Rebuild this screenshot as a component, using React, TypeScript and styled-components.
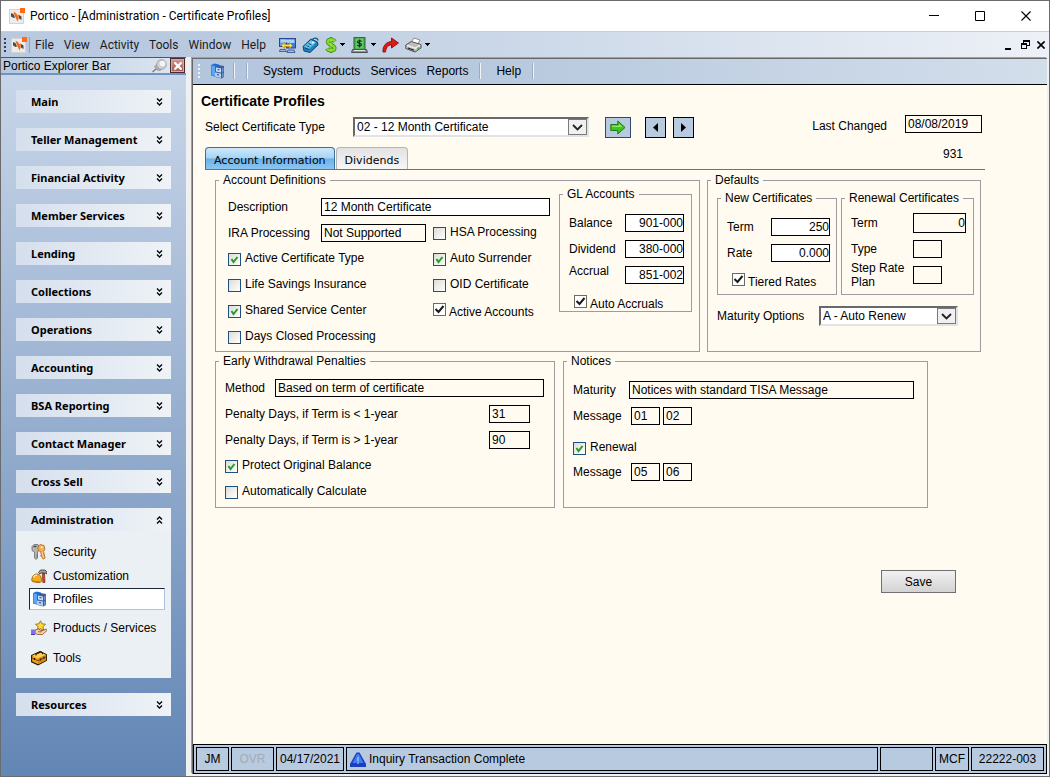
import React from "react";
import styled, { createGlobalStyle, css } from "styled-components";

const GlobalStyle = createGlobalStyle`
  * { box-sizing: border-box; }
  body { margin: 0; background: #6b6b6b; }
  body, button, input, select {
    font-family: "Liberation Sans", Arial, sans-serif;
    font-size: 12px;
    color: #000;
  }
  button, input, select { margin: 0; padding: 0; border-radius: 0; }
`;

/* ---------- window frame ---------- */

const Window = styled.div`
  display: flex;
  flex-direction: column;
  min-height: 100vh;
  border: 1px solid #6b6b6b;
  background: #f0f0f0;
`;

const TitleBar = styled.header`
  display: flex;
  align-items: center;
  height: 31px;
  padding-left: 8px;
  background: #fff;
  border-bottom: 1px solid #b9d1ea;
`;

const WindowTitle = styled.h1`
  flex: 1;
  margin: 0 0 0 5px;
  font: 400 12px/16px Roboto, "Open Sans", sans-serif;
`;

const CaptionButton = styled.button`
  display: grid;
  place-items: center;
  width: 46px;
  height: 30px;
  border: 0;
  background: transparent;
`;

const MenuBar = styled.div`
  display: flex;
  align-items: center;
  height: 25px;
  padding: 0 4px 0 3px;
  background: linear-gradient(90deg, #b8c9e0 0%, #b9cae0 20%, #edf1f7 100%);
`;

const MenuIcon = styled.span`
  display: flex;
  margin-left: 5px;
  padding-right: 2px;
  border-right: 1px solid #8ba3c4;
`;

const Menus = styled.nav`
  display: flex;
  gap: 10px;
  flex: none;
  margin-left: 5px;
`;

const MenuButton = styled.button`
  border: 0;
  background: transparent;
  font: 400 12px/18px Roboto, "Open Sans", sans-serif;
  color: #1b1b1b;
`;

const Tools = styled.div`
  display: flex;
  align-items: center;
  flex: 1;
  gap: 6px;
  margin-left: 13px;
`;

const IconButton = styled.button`
  display: flex;
  align-items: center;
  gap: 3px;
  border: 0;
  background: transparent;
`;

const MdiButtons = styled.div`
  display: flex;
  align-items: center;
  gap: 6px;
`;

const Grip = styled.span<{ $light?: boolean }>`
  width: 2px;
  height: 14px;
  background: repeating-linear-gradient(
    180deg,
    ${(p) => (p.$light ? "#eef3fa" : "#27415f")} 0 2px,
    transparent 2px 4px
  );
`;

const Body = styled.div`
  display: flex;
  flex: 1;
`;

/* ---------- explorer bar ---------- */

const Explorer = styled.aside`
  display: flex;
  flex-direction: column;
  flex: none;
  width: 185px;
  background: linear-gradient(180deg, #cbd8ea 0%, #6286b5 100%);
`;

const ExplorerHead = styled.div`
  display: flex;
  align-items: center;
  gap: 3px;
  height: 18px;
  padding: 0 1px 0 2px;
  border-top: 1px solid #555;
  border-bottom: 2px solid #6f94c4;
  background: linear-gradient(90deg, #b5c8df, #dfe8f2);
`;

const ExplorerTitle = styled.h2`
  flex: 1;
  margin: 0;
  font-size: 12px;
  font-weight: 400;
  line-height: 16px;
`;

const CloseButton = styled.button`
  display: grid;
  place-items: center;
  width: 15px;
  height: 15px;
  border: 1px solid #4a2a2e;
  background: linear-gradient(180deg, #cf9a94, #a35850);
  box-shadow: inset 0 0 0 1px #d8aaa6;
`;

const Groups = styled.div`
  display: flex;
  flex-direction: column;
  gap: 15px;
  padding: 15px;
`;

const GroupHead = styled.button`
  display: flex;
  align-items: center;
  justify-content: space-between;
  width: 100%;
  height: 23px;
  padding: 0 8px 0 15px;
  border: 0;
  background: linear-gradient(90deg, #d5dfed, #eff3f7);
  font: 700 11px/16px "Noto Sans", "Open Sans", sans-serif;
`;

const GroupBody = styled.div`
  padding: 9px 6px 5px 13px;
  background: #eaf0f4;
`;

const LinkList = styled.ul<{ $tall?: boolean }>`
  margin: ${(p) => (p.$tall ? "3px" : "0")} 0 0;
  padding: 0;
  list-style: none;
  a { height: ${(p) => (p.$tall ? "30px" : "24px")}; }
`;

const ExplorerLink = styled.a<{ $current?: boolean }>`
  display: flex;
  align-items: center;
  gap: 6px;
  padding-left: 2px;
  color: #000;
  text-decoration: none;
  ${(p) =>
    p.$current &&
    css`
      && { height: 22px; }
      background: #fff;
      border: 1px solid;
      border-color: #17263c #b0c4de #b0c4de #17263c;
    `}
`;

/* ---------- document area ---------- */

const Main = styled.main`
  display: flex;
  flex-direction: column;
  flex: 1;
  margin: 1px 2px 2px 6px;
  border: solid #696969;
  border-width: 1px 0 0 1px;
  box-shadow: -1px -1px #a0a0a0;
  background: #fffbf0;
`;

const PageBar = styled.div`
  display: flex;
  align-items: center;
  height: 26px;
  padding: 0 5px 1px;
  border-bottom: 1px solid #000;
  background: linear-gradient(90deg, #b4c6de 0%, #b9cadf 40%, #d3deeb 100%);
`;

const PageMenu = styled.nav`
  display: flex;
  gap: 10px;
  margin: 0 11px 0 16px;
`;

const PageMenuButton = styled.button`
  border: 0;
  background: transparent;
  line-height: 16px;
`;

const BarIcon = styled(IconButton)`
  margin: 0 8px 0 10px;
`;

const Divider = styled.span`
  width: 1px;
  height: 16px;
  background: #9caabd;
  box-shadow: 1px 0 #f0f4f9;
`;

const SecondDivider = styled(Divider)`
  margin-left: 12px;
`;

const Page = styled.section`
  flex: 1;
  padding: 8px 62px 16px 12px;
`;

const PageTitle = styled.h2`
  margin: 0 0 6px -4px;
  font-size: 14px;
  line-height: 16px;
`;

const PickerRow = styled.div`
  display: flex;
  align-items: flex-end;
  justify-content: space-between;
  height: 23px;
  padding-right: 3px;
`;

const Picker = styled.div`
  display: flex;
  line-height: 21px;
  > label { width: 148px; }
`;

const SquareButton = styled.button<{ $wide?: boolean }>`
  display: grid;
  place-items: center;
  width: ${(p) => (p.$wide ? "26px" : "21px")};
  height: 21px;
  margin-left: ${(p) => (p.$wide ? "16px" : "7px")};
  border: 1px solid ${(p) => (p.$wide ? "#33486a" : "#000")};
  background: #b8cae0;
`;

const PrevNext = styled.div`
  display: flex;
  margin-left: 7px;
`;

const LastChanged = styled.div`
  display: flex;
  align-self: flex-start;
  gap: 18px;
  line-height: 22px;
`;

const TabRow = styled.div`
  display: flex;
  height: 23px;
  margin-top: 9px;
  padding-right: 22px;
  border-bottom: 1px solid #4a7ba6;
`;

const Tab = styled.button<{ $active?: boolean }>`
  height: 22px;
  padding: 5px 8px 0;
  border: 1px solid ${(p) => (p.$active ? "#3c6e9e" : "#b5b5b5")};
  border-bottom: 0;
  border-radius: 4px 4px 0 0;
  background: ${(p) =>
    p.$active
      ? "linear-gradient(180deg, #cfe8fa 0%, #a5d3f5 48%, #69b1e8 52%, #8ec6f0 100%)"
      : "linear-gradient(180deg, #e2e2e2 0%, #f7f7f7 100%)"};
  font: 400 11px/16px "DejaVu Sans", Verdana, sans-serif;
  & + & { margin-left: 1px; }
`;

const RecordNumber = styled.span`
  margin-left: auto;
  line-height: 14px;
`;

const Columns = styled.div<{ $cols: string; $gap: number; $inset?: number }>`
  display: grid;
  grid-template-columns: ${(p) => p.$cols};
  gap: ${(p) => p.$gap}px;
  padding-right: ${(p) => p.$inset ?? 0}px;
`;

const Panels = styled.div`
  display: grid;
  gap: 2px;
  padding: 3px 4px 0 10px;
`;

/* ---------- form parts ---------- */

const Group = styled.fieldset`
  min-width: 0;
  margin: 0;
  padding: 0;
  border: 1px solid #9d9da1;
`;

const GroupTitle = styled.legend`
  margin-left: 3px;
  padding: 0 4px;
  line-height: 14px;
  white-space: nowrap;
`;

const GroupContent = styled.div<{ $pad: string }>`
  padding: ${(p) => p.$pad};
`;

const Row = styled.div<{ $label?: number; $height?: number }>`
  display: flex;
  align-items: center;
  height: ${(p) => p.$height ?? 26}px;
  line-height: 18px;
  white-space: nowrap;
  > label:first-child { width: ${(p) => (p.$label ? p.$label + "px" : "auto")}; }
`;

const RenewalRow = styled(Row)`
  margin-top: 8px;
`;

const TopLabel = styled.label`
  align-self: flex-start;
`;

const TwoLineLabel = styled.label`
  line-height: 14px;
  white-space: normal;
`;

const TextBox = styled.input<{ $w?: number; $filled?: boolean; $right?: boolean; $tall?: boolean }>`
  width: ${(p) => (p.$w ? p.$w + "px" : "auto")};
  ${(p) => !p.$w && "flex: 1; min-width: 0;"}
  height: ${(p) => (p.$tall ? "20px" : "18px")};
  padding: 0 ${(p) => (p.$right ? "0" : "2px")} 0 2px;
  border: 1px solid #000;
  background: ${(p) => (p.$filled ? "#fff" : "transparent")};
  text-align: ${(p) => (p.$right ? "right" : "left")};
  & + & { margin-left: 3px; }
`;

const CheckLabel = styled.label<{ $dark?: boolean }>`
  display: flex;
  align-items: ${(p) => (p.$dark ? "flex-end" : "flex-start")};
  gap: ${(p) => (p.$dark ? "3px" : "4px")};
  height: 16px;
  line-height: 14px;
  white-space: nowrap;
`;

const CheckCell = styled.span<{ $dark?: boolean }>`
  display: grid;
  align-self: ${(p) => (p.$dark ? "flex-start" : "flex-end")};
  padding-bottom: 1px;
  > * { grid-area: 1 / 1; }
  svg { pointer-events: none; display: none; }
  input:checked + svg { display: block; }
`;

const CheckInput = styled.input<{ $dark?: boolean }>`
  appearance: none;
  width: 13px;
  height: 13px;
  border: 1px solid ${(p) => (p.$dark ? "#6a6a6a" : "#1c5180")};
  background: ${(p) => (p.$dark ? "#fff" : "linear-gradient(135deg, #dcdcd7 0%, #fff 100%)")};
`;

const SelectShell = styled.div<{ $w: number }>`
  display: grid;
  align-items: center;
  width: ${(p) => p.$w}px;
  height: 20px;
  > * { grid-area: 1 / 1; }
`;

const SelectBox = styled.select`
  appearance: none;
  width: 100%;
  height: 20px;
  padding: 0 22px 0 2px;
  border: 2px solid;
  border-color: #696969 #e3e3e3 #e3e3e3 #696969;
  background: #fff;
`;

const SelectArrow = styled.span`
  display: grid;
  place-items: center;
  justify-self: end;
  width: 19px;
  height: 16px;
  margin-right: 2px;
  border: 1px solid #7a7a7a;
  background: #f0f0f0;
  pointer-events: none;
`;

const AccountGrid = styled.div`
  display: grid;
  grid-template-columns: 205px 118px;
`;

const AccountLayout = styled.div`
  display: flex;
  justify-content: space-between;
  align-items: flex-start;
  padding: 0 7px 0 12px;
`;

const AccountFields = styled.div`
  width: 322px;
  padding: 7px 0 1px;
`;

const GlGroup = styled(Group)`
  width: 133px;
`;

const BottomCheck = styled.div`
  padding: 7px 0 0 5px;
`;

const OptionsRow = styled.div`
  display: grid;
  grid-template-columns: 102px auto;
  padding-top: 11px;
  line-height: 20px;
`;

const SaveRow = styled.div`
  display: flex;
  justify-content: flex-end;
  padding: 62px 29px 0 0;
`;

const SaveButton = styled.button`
  width: 75px;
  height: 23px;
  border: 1px solid #707070;
  background: linear-gradient(180deg, #f1f1f1, #d3d3d3);
`;

/* ---------- status bar ---------- */

const StatusBar = styled.footer`
  display: flex;
  gap: 2px;
  padding: 2px;
  border: 1px solid #000;
  background: #b8cae0;
`;

const StatusCell = styled.span<{ $w?: number; $muted?: boolean }>`
  display: flex;
  align-items: center;
  justify-content: ${(p) => (p.$w ? "center" : "flex-start")};
  gap: 3px;
  height: 24px;
  padding: 0 3px;
  ${(p) => (p.$w ? `flex: none; width: ${p.$w}px;` : "flex: 1;")}
  border: 1px solid #000;
  color: ${(p) => (p.$muted ? "#a3abb5" : "#000")};
  white-space: nowrap;
`;

/* ---------- drawings ---------- */

const AppIcon = () => (
  <svg width="16" height="16" viewBox="0 0 16 16" aria-hidden="true">
    <rect x="0" y="1" width="15" height="15" rx="1" fill="#d2d2d2" />
    <rect x="1" y="2" width="13" height="13" fill="#ececec" />
    <path d="M2 5l2.500 1 1.500 3.500-1.500.5L2 8.500z" fill="#4c4c4c" />
    <path d="M10 7l2.500 1.500V12L10 10.500z" fill="#4c4c4c" />
    <path d="M4.500 3.500L7 5l1.500 2.500L10 6l-.5 5-.8 2.500-1.700-3L5.500 7z" fill="#f26a1b" />
    <rect x="11" y="0" width="5" height="5" fill="#ff6a13" />
  </svg>
);

const MonitorsIcon = () => (
  <svg width="17" height="16" viewBox="0 0 17 16" aria-hidden="true">
    <rect x=".5" y="1.500" width="9" height="8" fill="#5f9de4" stroke="#24499b" />
    <rect x="7.500" y="1.500" width="9" height="9.500" fill="#4478cf" stroke="#24499b" />
    <path d="M1.500 2.500h7v3h-7zM8.500 2.500h7v3.500h-7z" fill="#a9d2f8" />
    <path d="M2.500 8.500l3-3v2h5v-2l3 3-3 3v-2h-5v2z" fill="#ffe14d" stroke="#b98a0a" strokeWidth=".6" />
    <path d="M1 12.500h5.500l1 2H.5zM9 13h6l1 2.500H8z" fill="#a9bcde" stroke="#2c4a8e" strokeWidth=".8" />
  </svg>
);

const TagIcon = () => (
  <svg width="17" height="16" viewBox="0 0 17 16" aria-hidden="true">
    <path d="M1 9.500L9 2l6.500 3 .5 3L8 15.500 2 14z" fill="#1f82ba" stroke="#0d4770" />
    <path d="M2 9.500L9 3l5 2.500L7 12z" fill="#6cc9ea" />
    <path d="M10 3.500C11 .5 15.500 0 16 3.500" fill="none" stroke="#17567f" strokeWidth="1.300" />
    <circle cx="11" cy="5.500" r="1" fill="#fff" />
    <path d="M4.500 8.500l3 1.500M6.500 6.500l3 1.500M3 11l4 1.500" stroke="#0d4770" />
  </svg>
);

const DollarIcon = () => (
  <svg width="12" height="16" viewBox="0 0 12 16" aria-hidden="true">
    <path d="M6 0v16" stroke="#3f8f12" strokeWidth="2.600" />
    <path d="M10 4.500C8.500 2.300 2.800 2 2.800 5s6.700 2.700 6.700 6-6 3-7.500.500" fill="none" stroke="#3f8f12" strokeWidth="4" />
    <path d="M10 4.500C8.500 2.300 2.800 2 2.800 5s6.700 2.700 6.700 6-6 3-7.500.500" fill="none" stroke="#86dc2e" strokeWidth="2.400" />
    <path d="M6 1v14" stroke="#9fe84a" strokeWidth="1" />
  </svg>
);

const CashIcon = () => (
  <svg width="17" height="16" viewBox="0 0 17 16" aria-hidden="true">
    <rect x="3" y=".5" width="11" height="12" fill="#3fa34c" stroke="#2f6b38" />
    <rect x="4.500" y="1.500" width="8" height="10" fill="#66c56b" />
    <path d="M10.500 4.500c-1-1.200-4-1-4 .6 0 1.700 4 .9 4 2.700 0 1.600-3 1.700-4.200.4M8.500 2.500v8" fill="none" stroke="#0e3a14" strokeWidth="1.200" />
    <path d="M1.500 12.500h14l1 3H.5z" fill="#8b9298" stroke="#4b5157" />
    <path d="M3 13.500h11" stroke="#e1e5e8" />
  </svg>
);

const RedArrowIcon = () => (
  <svg width="17" height="16" viewBox="0 0 17 16" aria-hidden="true">
    <path d="M1 15C.5 9 4 5 9.500 4.500V1L16.500 6l-7 5V8C6 8 4 10.500 3.500 15z" fill="#e01818" stroke="#8e0b0b" strokeWidth=".9" />
  </svg>
);

const PrinterIcon = () => (
  <svg width="17" height="16" viewBox="0 0 17 16" aria-hidden="true">
    <path d="M6 5.500l3-4.500 6 2-3 5.500z" fill="#fff" stroke="#777" strokeWidth=".8" />
    <path d="M.8 8l5.500-3.500 9.700 3V11L10 15 .8 11.500z" fill="#bdbdbd" stroke="#444" strokeWidth=".9" />
    <path d="M2 8.300l8.500 3 4.500-3.300" fill="none" stroke="#f6f6f6" strokeWidth="1.300" />
    <path d="M3 11l6 2.200" fill="none" stroke="#222" strokeWidth="1.200" />
    <rect x="12" y="10.500" width="2.500" height="1.500" fill="#43b943" />
  </svg>
);

const Caret = () => (
  <svg width="5" height="3" viewBox="0 0 5 3" aria-hidden="true" shapeRendering="crispEdges">
    <path d="M0 0h5v1H0zM1 1h3v1H1zM2 2h1v1H2z" />
  </svg>
);

const CabinetIcon = () => (
  <svg width="15" height="16" viewBox="0 0 15 16" aria-hidden="true">
    <path d="M1 2l3.500-1.500L9 1.500V13l-2.500 1L1 12.500z" fill="#1f6ed8" />
    <path d="M1.500 2.500L5 3v10l-3.500-1z" fill="#5aa7f7" />
    <path d="M6.500 3.500L8.500 2 14 3v11l-2.500 1.500-6-1.500z" fill="#3a5f9c" />
    <path d="M6 4.500l5 1v4l-5-1z" fill="#c9def5" />
    <path d="M5 9.500l6 1v4.500l-6-1.500z" fill="#b3cff0" />
    <path d="M12 5.500l1.500-1v4L12 9.500zM12 10.500l1.500-1v4l-1.500 1z" fill="#6d96cf" />
    <path d="M7.500 6.500l2 .5M7 11.500l2 .5" stroke="#2b4b80" strokeWidth="1.200" />
  </svg>
);

const KeysIcon = () => (
  <svg width="16" height="16" viewBox="0 0 16 16" aria-hidden="true">
    <path d="M1 2.500L3 .5h4L8 3v3L6.500 8v6L5 15.500 3.500 14V8L1 6.500z" fill="#b4b4b4" stroke="#6c6c6c" strokeWidth=".8" />
    <path d="M2.500 2.500h3" stroke="#4d4d4d" strokeWidth="1.400" />
    <path d="M6.500 13h-1M6.500 11h-1" stroke="#555" />
    <path d="M7 3l2-2.500 4 1 1 3.500-1.500 2.500 1.500 6-1 1.500-1.500-.5-.5-2-1.500-.5 1-1-1-3.500L7 6.500z" fill="#f3ad57" stroke="#a9641d" strokeWidth=".8" />
    <path d="M10 3l1.500.5" stroke="#fff" strokeWidth="1.800" />
    <path d="M11 8l1.500 6" stroke="#ffdca6" strokeWidth=".8" />
  </svg>
);

const HammerIcon = () => (
  <svg width="16" height="15" viewBox="0 0 16 15" aria-hidden="true">
    <path d="M11.300 4L13.500 4 14 13.500 11.800 13.500z" fill="#d0431f" stroke="#7c1f0a" strokeWidth=".6" />
    <path d="M7.500 3.500L9.500 1h4.500l2 2v2l-2-1h-4.500L9 5z" fill="#a2a2a2" stroke="#333" strokeWidth=".8" />
    <path d="M.8 11.500C.8 7.500 3 5 6 5s4.500 3 4.500 6.500c0 1.500-1 2-2.500 2-3 0-7.200-.5-7.200-2z" fill="#f8ac1a" stroke="#8f5206" strokeWidth=".8" />
    <path d="M2.500 8.500C3.200 7 4.500 6 6 6" fill="none" stroke="#ffe894" strokeWidth="1.400" />
    <path d="M1.500 11.700c2 .8 5 1 7 .8" fill="none" stroke="#c77a0c" strokeWidth="1" />
  </svg>
);

const ServiceIcon = () => (
  <svg width="16" height="16" viewBox="0 0 16 16" aria-hidden="true">
    <path d="M9.500.8l1.500 3 3.500.4L12 6.800l.6 3.300-3.100-1.400-3.100 1.400L7 6.800 4.500 4.200 8 3.800z" fill="#ffd83a" stroke="#94701a" strokeWidth=".9" />
    <path d="M4 10l3.500-1 2.500 1.500h2l3-1.500 1 1.500-4.500 4H7l-3-1z" fill="#fbd3ac" stroke="#7d4d1f" strokeWidth=".8" />
    <path d="M7 11.800h4" stroke="#7d4d1f" strokeWidth=".8" />
    <rect x="0" y="9.500" width="4" height="5" fill="#8470e6" />
    <path d="M0 14.500h4" stroke="#4d3cb5" />
  </svg>
);

const ToolboxIcon = () => (
  <svg width="16" height="16" viewBox="0 0 16 16" aria-hidden="true">
    <path d="M.6 5.500L9 1.500l6.400 3v6L7 14.800l-6.400-3z" fill="#f2a41b" stroke="#2c1903" strokeWidth="1.100" />
    <path d="M1.300 5.600L9 2.200l5.500 2.500L7 8.300z" fill="#ffd050" />
    <path d="M7 8.800l8-4v5.500l-8 4z" fill="#d98a10" />
    <path d="M1 8l6 2.800 8-4" fill="none" stroke="#6b3f05" strokeWidth=".9" />
    <path d="M5 5.500V4l5-2 1.500.8v1.500" fill="none" stroke="#2c1903" strokeWidth="1.200" />
    <path d="M3.500 8v2M9.500 8.500v2M13 6.800v2" stroke="#2c1903" strokeWidth="1.200" />
  </svg>
);

const PinIcon = () => (
  <svg width="15" height="14" viewBox="0 0 15 14" aria-hidden="true">
    <path d="M4 10L.5 13" stroke="#777" strokeWidth="1.200" />
    <path d="M2.500 7.500l4-3.500 4.500 5-3 2.500-3-.5z" fill="#b0b0b0" stroke="#8a8a8a" strokeWidth=".7" />
    <circle cx="9.500" cy="5.500" r="4.800" fill="#d2d2d2" stroke="#949494" strokeWidth=".8" />
    <circle cx="10.500" cy="4.500" r="2.800" fill="#f4f4f4" />
  </svg>
);

const CrossIcon = ({ size, color, weight }: { size: number; color: string; weight: number }) => (
  <svg width={size} height={size} viewBox="0 0 10 10" aria-hidden="true">
    <path d="M.5.5l9 9M9.500.5l-9 9" stroke={color} strokeWidth={weight} />
  </svg>
);

const Chevrons = ({ up }: { up?: boolean }) => (
  <svg width="7" height="8" viewBox="0 0 7 8" aria-hidden="true">
    <path
      d={up ? "M1 3.500l2.500-2.500 2.500 2.500M1 7.500l2.500-2.500 2.500 2.500" : "M1 .5l2.500 2.500 2.500-2.500M1 4.500l2.500 2.500 2.500-2.500"}
      fill="none"
      stroke="#000"
      strokeWidth="1.300"
    />
  </svg>
);

const GoIcon = () => (
  <svg width="16" height="15" viewBox="0 0 16 15" aria-hidden="true">
    <path d="M.8 4.500h7V1L15 7.500 7.800 14v-3.500h-7z" fill="#3fc420" stroke="#1f7a14" />
    <path d="M2 5.700h7V4l3.500 3H2z" fill="#93e66a" />
  </svg>
);

const Triangle = ({ left }: { left?: boolean }) => (
  <svg width="5" height="9" viewBox="0 0 5 9" aria-hidden="true">
    <path d={left ? "M5 0v9L0 4.500z" : "M0 0v9l5-4.500z"} />
  </svg>
);

const AlertIcon = () => (
  <svg width="16" height="15" viewBox="0 0 16 15" aria-hidden="true">
    <path d="M6.500.5h3L16 12v3H0v-3z" fill="#1c3fc0" />
    <path d="M7 2h2l4.500 9h-11z" fill="#3f7df0" />
    <path d="M8 5v4.500M8 10.500v1.500" stroke="#a9c8ff" strokeWidth="1.300" />
  </svg>
);

/* ---------- composed controls ---------- */

type CheckProps = { text: string; on?: boolean; dark?: boolean };

const Check = ({ text, on, dark }: CheckProps) => (
  <CheckLabel $dark={dark}>
    <CheckCell $dark={dark}>
      <CheckInput type="checkbox" defaultChecked={on} $dark={dark} />
      <svg width="13" height="13" viewBox="0 0 13 13" aria-hidden="true">
        <path
          d={dark ? "M2.500 6l3 3L10.500 3" : "M3.500 6l2 3L9.500 4"}
          fill="none"
          stroke={dark ? "#1a1a1a" : "#21a121"}
          strokeWidth="2"
        />
      </svg>
    </CheckCell>
    {text}
  </CheckLabel>
);

const Select = ({ id, value, width }: { id: string; value: string; width: number }) => (
  <SelectShell $w={width}>
    <SelectBox id={id} defaultValue={value}>
      <option>{value}</option>
    </SelectBox>
    <SelectArrow>
      <svg width="11" height="7" viewBox="0 0 11 7" aria-hidden="true">
        <path d="M1 1l4.500 4.500L10 1" fill="none" stroke="#222" strokeWidth="1.800" />
      </svg>
    </SelectArrow>
  </SelectShell>
);

const closedGroups = [
  "Main",
  "Teller Management",
  "Financial Activity",
  "Member Services",
  "Lending",
  "Collections",
  "Operations",
  "Accounting",
  "BSA Reporting",
  "Contact Manager",
  "Cross Sell",
];

const ClosedGroup = ({ name }: { name: string }) => (
  <GroupHead aria-expanded="false">
    {name}
    <Chevrons />
  </GroupHead>
);

const ExplorerBar = () => (
  <Explorer>
    <ExplorerHead>
      <ExplorerTitle>Portico Explorer Bar</ExplorerTitle>
      <PinIcon />
      <CloseButton aria-label="Close explorer bar">
        <CrossIcon size={8} color="#fff" weight={2.8} />
      </CloseButton>
    </ExplorerHead>
    <Groups>
      {closedGroups.map((name) => (
        <ClosedGroup key={name} name={name} />
      ))}
      <div>
        <GroupHead aria-expanded="true">
          Administration
          <Chevrons up />
        </GroupHead>
        <GroupBody>
          <LinkList>
            <li><ExplorerLink href="#security"><KeysIcon />Security</ExplorerLink></li>
            <li><ExplorerLink href="#customization"><HammerIcon />Customization</ExplorerLink></li>
            <li><ExplorerLink href="#profiles" $current aria-current="page"><CabinetIcon />Profiles</ExplorerLink></li>
          </LinkList>
          <LinkList $tall>
            <li><ExplorerLink href="#products"><ServiceIcon />Products / Services</ExplorerLink></li>
            <li><ExplorerLink href="#tools"><ToolboxIcon />Tools</ExplorerLink></li>
          </LinkList>
        </GroupBody>
      </div>
      <ClosedGroup name="Resources" />
    </Groups>
  </Explorer>
);

const AccountDefinitions = () => (
  <Group>
    <GroupTitle>Account Definitions</GroupTitle>
    <AccountLayout>
      <AccountFields>
        <Row $label={93}>
          <label htmlFor="description">Description</label>
          <TextBox id="description" defaultValue="12 Month Certificate" $filled />
        </Row>
        <AccountGrid>
          <Row $label={93}>
            <label htmlFor="ira">IRA Processing</label>
            <TextBox id="ira" defaultValue="Not Supported" $w={105} />
          </Row>
          <Row><Check text="HSA Processing" /></Row>
          <Row><Check text="Active Certificate Type" on /></Row>
          <Row><Check text="Auto Surrender" on /></Row>
          <Row><Check text="Life Savings Insurance" /></Row>
          <Row><Check text="OID Certificate" /></Row>
          <Row><Check text="Shared Service Center" on /></Row>
          <Row><Check text="Active Accounts" on dark /></Row>
          <Row><Check text="Days Closed Processing" /></Row>
        </AccountGrid>
      </AccountFields>
      <GlGroup>
        <GroupTitle>GL Accounts</GroupTitle>
        <GroupContent $pad="9px 7px 0 9px">
          <Row $label={56}>
            <label htmlFor="gl-balance">Balance</label>
            <TextBox id="gl-balance" defaultValue="901-000" $w={59} $filled $right />
          </Row>
          <Row $label={56}>
            <label htmlFor="gl-dividend">Dividend</label>
            <TextBox id="gl-dividend" defaultValue="380-000" $w={59} $filled $right />
          </Row>
          <Row $label={56}>
            <TopLabel htmlFor="gl-accrual">Accrual</TopLabel>
            <TextBox id="gl-accrual" defaultValue="851-002" $w={59} $filled $right />
          </Row>
          <BottomCheck><Check text="Auto Accruals" on dark /></BottomCheck>
        </GroupContent>
      </GlGroup>
    </AccountLayout>
  </Group>
);

const Defaults = () => (
  <Group>
    <GroupTitle>Defaults</GroupTitle>
    <GroupContent $pad="4px 6px 0 9px">
      <Columns $cols="120fr 133fr" $gap={4}>
        <Group>
          <GroupTitle>New Certificates</GroupTitle>
          <GroupContent $pad="9px 6px 5px 9px">
            <Row $label={44}>
              <label htmlFor="new-term">Term</label>
              <TextBox id="new-term" defaultValue="250" $w={59} $filled $right />
            </Row>
            <Row $label={44}>
              <label htmlFor="new-rate">Rate</label>
              <TextBox id="new-rate" defaultValue="0.000" $w={59} $filled $right />
            </Row>
            <BottomCheck><Check text="Tiered Rates" on dark /></BottomCheck>
          </GroupContent>
        </Group>
        <Group>
          <GroupTitle>Renewal Certificates</GroupTitle>
          <GroupContent $pad="5px 6px 5px 9px">
            <Row $label={62}>
              <label htmlFor="renewal-term">Term</label>
              <TextBox id="renewal-term" defaultValue="0" $w={53} $right $tall />
            </Row>
            <Row $label={62}>
              <label htmlFor="renewal-type">Type</label>
              <TextBox id="renewal-type" $w={29} />
            </Row>
            <Row $label={62}>
              <TwoLineLabel htmlFor="step-plan">Step Rate Plan</TwoLineLabel>
              <TextBox id="step-plan" $w={29} />
            </Row>
          </GroupContent>
        </Group>
      </Columns>
      <OptionsRow>
        <label htmlFor="maturity-options">Maturity Options</label>
        <Select id="maturity-options" value="A - Auto Renew" width={139} />
      </OptionsRow>
    </GroupContent>
  </Group>
);

const Penalties = () => (
  <Group>
    <GroupTitle>Early Withdrawal Penalties</GroupTitle>
    <GroupContent $pad="7px 10px 2px 9px">
      <Row $label={50}>
        <label htmlFor="method">Method</label>
        <TextBox id="method" defaultValue="Based on term of certificate" />
      </Row>
      <Row $label={264}>
        <label htmlFor="under-year">Penalty Days, if Term is &lt; 1-year</label>
        <TextBox id="under-year" defaultValue="31" $w={41} />
      </Row>
      <Row $label={264}>
        <label htmlFor="over-year">Penalty Days, if Term is &gt; 1-year</label>
        <TextBox id="over-year" defaultValue="90" $w={41} />
      </Row>
      <Row><Check text="Protect Original Balance" on /></Row>
      <Row><Check text="Automatically Calculate" /></Row>
    </GroupContent>
  </Group>
);

const Notices = () => (
  <Group>
    <GroupTitle>Notices</GroupTitle>
    <GroupContent $pad="9px 13px 0 9px">
      <Row $label={56}>
        <label htmlFor="maturity">Maturity</label>
        <TextBox id="maturity" defaultValue="Notices with standard TISA Message" />
      </Row>
      <Row $label={58}>
        <label htmlFor="message-1">Message</label>
        <TextBox id="message-1" defaultValue="01" $w={29} />
        <TextBox aria-label="Second maturity message" defaultValue="02" $w={29} />
      </Row>
      <RenewalRow $height={22}><Check text="Renewal" on /></RenewalRow>
      <Row $label={58}>
        <label htmlFor="message-2">Message</label>
        <TextBox id="message-2" defaultValue="05" $w={29} />
        <TextBox aria-label="Second renewal message" defaultValue="06" $w={29} />
      </Row>
    </GroupContent>
  </Group>
);

export default function App() {
  return (
    <>
      <GlobalStyle />
      <Window>
        <TitleBar>
          <AppIcon />
          <WindowTitle>Portico - [Administration - Certificate Profiles]</WindowTitle>
          <CaptionButton aria-label="Minimize">
            <svg width="10" height="10" aria-hidden="true"><path d="M0 4.500h10" stroke="#000" /></svg>
          </CaptionButton>
          <CaptionButton aria-label="Maximize">
            <svg width="10" height="10" aria-hidden="true"><path d="M.5.5h9v9h-9z" fill="none" stroke="#000" /></svg>
          </CaptionButton>
          <CaptionButton aria-label="Close">
            <CrossIcon size={10} color="#000" weight={1.1} />
          </CaptionButton>
        </TitleBar>

        <MenuBar>
          <Grip />
          <MenuIcon><AppIcon /></MenuIcon>
          <Menus>
            {["File", "View", "Activity", "Tools", "Window", "Help"].map((m) => (
              <MenuButton key={m}>{m}</MenuButton>
            ))}
          </Menus>
          <Tools>
            <IconButton aria-label="Switch member"><MonitorsIcon /></IconButton>
            <IconButton aria-label="Tag"><TagIcon /></IconButton>
            <IconButton aria-label="Transactions"><DollarIcon /><Caret /></IconButton>
            <IconButton aria-label="Cash"><CashIcon /><Caret /></IconButton>
            <IconButton aria-label="Forward"><RedArrowIcon /></IconButton>
            <IconButton aria-label="Print"><PrinterIcon /><Caret /></IconButton>
          </Tools>
          <MdiButtons>
            <IconButton aria-label="Minimize page">
              <svg width="13" height="10" aria-hidden="true"><path d="M3 8h6v2H3z" /></svg>
            </IconButton>
            <IconButton aria-label="Restore page">
              <svg width="10" height="10" aria-hidden="true" shapeRendering="crispEdges">
                <path d="M2.500 3V.5h6v5H6M2.500 1.500h6M.5 3.500h5v5h-5zM.5 4.500h5" fill="none" stroke="#000" />
              </svg>
            </IconButton>
            <IconButton aria-label="Close page"><CrossIcon size={8} color="#000" weight={2} /></IconButton>
          </MdiButtons>
        </MenuBar>

        <Body>
          <ExplorerBar />
          <Main>
            <PageBar>
              <Grip $light />
              <BarIcon aria-label="Profiles"><CabinetIcon /></BarIcon>
              <Divider />
              <SecondDivider />
              <PageMenu>
                {["System", "Products", "Services", "Reports"].map((m) => (
                  <PageMenuButton key={m}>{m}</PageMenuButton>
                ))}
              </PageMenu>
              <Divider />
              <PageMenu><PageMenuButton>Help</PageMenuButton></PageMenu>
              <Divider />
            </PageBar>

            <Page>
              <PageTitle>Certificate Profiles</PageTitle>
              <PickerRow>
                <Picker>
                  <label htmlFor="certificate-type">Select Certificate Type</label>
                  <Select id="certificate-type" value="02 - 12 Month Certificate" width={236} />
                  <SquareButton $wide aria-label="Go"><GoIcon /></SquareButton>
                  <PrevNext>
                    <SquareButton aria-label="Previous"><Triangle left /></SquareButton>
                    <SquareButton aria-label="Next"><Triangle /></SquareButton>
                  </PrevNext>
                </Picker>
                <LastChanged>
                  <label htmlFor="last-changed">Last Changed</label>
                  <TextBox id="last-changed" defaultValue="08/08/2019" $w={77} />
                </LastChanged>
              </PickerRow>

              <TabRow>
                <Tab $active>Account Information</Tab>
                <Tab>Dividends</Tab>
                <RecordNumber>931</RecordNumber>
              </TabRow>

              <Panels>
                <Columns $cols="485fr 274fr" $gap={7}>
                  <AccountDefinitions />
                  <Defaults />
                </Columns>
                <Columns $cols="340fr 365fr" $gap={8} $inset={53}>
                  <Penalties />
                  <Notices />
                </Columns>
              </Panels>

              <SaveRow><SaveButton>Save</SaveButton></SaveRow>
            </Page>

            <StatusBar>
              <StatusCell $w={33}>JM</StatusCell>
              <StatusCell $w={43} $muted>OVR</StatusCell>
              <StatusCell $w={68}>04/17/2021</StatusCell>
              <StatusCell><AlertIcon />Inquiry Transaction Complete</StatusCell>
              <StatusCell $w={53} />
              <StatusCell $w={34}>MCF</StatusCell>
              <StatusCell $w={73}>22222-003</StatusCell>
            </StatusBar>
          </Main>
        </Body>
      </Window>
    </>
  );
}
